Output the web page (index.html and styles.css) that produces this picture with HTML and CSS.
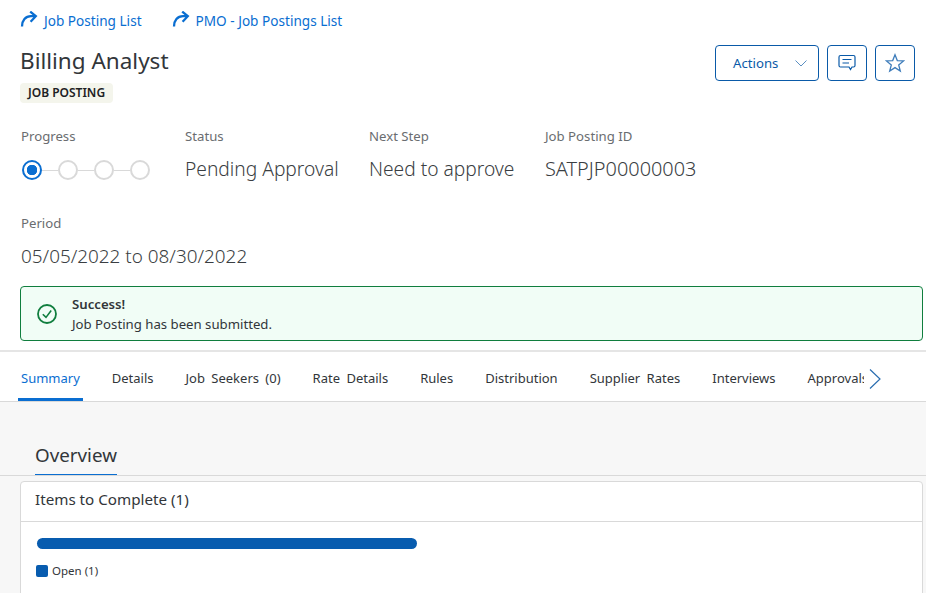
FILE: index.html
```html
<!DOCTYPE html>
<html lang="en">
<head>
  <meta charset="UTF-8" />
  <title>Billing Analyst</title>
  <link rel="stylesheet" href="styles.css">
</head>
<body>
  <header class="page-head">
    <nav class="crumbs">
      <a class="crumb" href="#">
        <svg class="crumb-icon" width="18" height="18" viewBox="0 0 18 18"><path d="M2 15.500 C2 9.500 5.500 5.200 11 5.200 H15 M10.200 .6 L15.800 5.200 L10.600 10.800" fill="none" stroke="#0a6ed1" stroke-width="2.300"/></svg>
        Job Posting List
      </a>
      <a class="crumb" href="#">
        <svg class="crumb-icon" width="18" height="18" viewBox="0 0 18 18"><path d="M2 15.500 C2 9.500 5.500 5.200 11 5.200 H15 M10.200 .6 L15.800 5.200 L10.600 10.800" fill="none" stroke="#0a6ed1" stroke-width="2.300"/></svg>
        PMO - Job Postings List
      </a>
    </nav>

    <div class="title-row">
      <div>
        <h1>Billing Analyst</h1>
        <span class="badge">JOB POSTING</span>
      </div>
      <div class="actions">
        <button class="btn btn-menu">Actions
          <svg width="12" height="7" viewBox="0 0 12 7"><path d="M.5 .5 L6 6 L11.500 .5" fill="none" stroke="#5b8fc2" stroke-width="1"/></svg>
        </button>
        <button class="btn btn-icon" aria-label="Comment">
          <svg width="18" height="18" viewBox="0 0 18 18"><path d="M2.500 1.500 H15.500 A1.500 1.500 0 0 1 17 3 V11.500 A1.500 1.500 0 0 1 15.500 13 H14 L12.500 15.500 L11 13 H2.500 A1.500 1.500 0 0 1 1 11.500 V3 A1.500 1.500 0 0 1 2.500 1.500 Z M4.500 5.500 H13.500 M4.500 9 H11" fill="none" stroke="#0a5aa8" stroke-width="1.200"/></svg>
        </button>
        <button class="btn btn-icon" aria-label="Favorite">
          <svg width="20" height="20" viewBox="0 0 20 20"><path d="M10 1.800 L12.300 7.600 L18.500 7.900 L13.700 11.900 L15.300 18 L10 14.600 L4.700 18 L6.300 11.900 L1.500 7.900 L7.700 7.600 Z" fill="none" stroke="#3f7dbb" stroke-width="1.300"/></svg>
        </button>
      </div>
    </div>

    <div class="facts">
      <div class="fact fact-progress">
        <div class="fact-label">Progress</div>
        <div class="steps">
          <span class="step step-current"></span><span class="step-line"></span>
          <span class="step"></span><span class="step-line"></span>
          <span class="step"></span><span class="step-line"></span>
          <span class="step"></span>
        </div>
      </div>
      <div class="fact fact-status">
        <div class="fact-label">Status</div>
        <div class="fact-value">Pending Approval</div>
      </div>
      <div class="fact fact-next">
        <div class="fact-label">Next Step</div>
        <div class="fact-value">Need to approve</div>
      </div>
      <div class="fact">
        <div class="fact-label">Job Posting ID</div>
        <div class="fact-value fact-value-id">SATPJP00000003</div>
      </div>
    </div>

    <div class="fact period">
      <div class="fact-label">Period</div>
      <div class="fact-value fact-value-date">05/05/2022 to 08/30/2022</div>
    </div>

    <div class="alert">
      <svg width="20" height="20" viewBox="0 0 20 20"><circle cx="10" cy="10" r="9" fill="none" stroke="#107e3e" stroke-width="1.800"/><path d="M5.800 10.200 L9 13.400 L14.200 6.600" fill="none" stroke="#107e3e" stroke-width="1.600"/></svg>
      <div>
        <div class="alert-title">Success!</div>
        <div>Job Posting has been submitted.</div>
      </div>
    </div>
  </header>

  <nav class="tabs">
    <a class="tab tab-active" href="#">Summary</a>
    <a class="tab" href="#">Details</a>
    <a class="tab" href="#">Job Seekers (0)</a>
    <a class="tab" href="#">Rate Details</a>
    <a class="tab" href="#">Rules</a>
    <a class="tab" href="#">Distribution</a>
    <a class="tab" href="#">Supplier Rates</a>
    <a class="tab" href="#">Interviews</a>
    <a class="tab tab-cut" href="#">Approvals</a>
    <svg class="tabs-next" width="12" height="20" viewBox="0 0 12 20"><path d="M1 .5 L11 10 L1 19.500" fill="none" stroke="#2a6db0" stroke-width="1.200"/></svg>
  </nav>

  <main class="content">
    <div class="section-head">
      <h2>Overview</h2>
    </div>
    <section class="card">
      <div class="card-head">Items to Complete (1)</div>
      <div class="card-body">
        <div class="bar"></div>
        <div class="legend"><span class="legend-dot"></span>Open (1)</div>
      </div>
    </section>
  </main>
</body>
</html>
```

FILE: styles.css
```css
html, body {
  height: 100%;
}

body {
  margin: 0;
  font-family: "Noto Sans", "Open Sans", sans-serif;
  color: #32363a;
  background: #fff;
  overflow: hidden;
}

.page-head {
  padding: 10px 3px 0 20px;
  height: 340px;
  box-sizing: border-box;
}

.crumbs {
  display: flex;
  gap: 30px;
  height: 20px;
}

.crumb {
  display: flex;
  align-items: center;
  gap: 6px;
  font-size: 13.600px;
  color: #0a6ed1;
  text-decoration: none;
}

.title-row {
  display: flex;
  justify-content: space-between;
  margin-top: 12px;
  padding-right: 8px;
}

h1 {
  margin: 0;
  font-size: 22.500px;
  font-weight: 400;
  line-height: 38px;
}

.badge {
  display: block;
  width: fit-content;
  margin-top: 3px;
  padding: 0 8px;
  height: 20px;
  line-height: 20px;
  font-size: 12px;
  font-weight: 600;
  color: #1d2124;
  background: #f4f5ec;
  border-radius: 4px;
}

.actions {
  display: flex;
  gap: 8px;
  margin-top: 3px;
}

.btn {
  height: 36px;
  box-sizing: border-box;
  border: 1px solid #0a5aa8;
  border-radius: 4px;
  background: #fff;
  color: #0a5aa8;
  font-family: inherit;
  font-size: 13.200px;
  display: flex;
  align-items: center;
  justify-content: center;
  padding: 0;
}

.btn-menu {
  width: 104px;
  gap: 17px;
  justify-content: flex-start;
  padding-left: 17px;
}

.btn-icon {
  width: 40px;
}

.facts {
  display: flex;
  margin-top: 23px;
  padding-left: 1px;
}

.fact-progress {
  width: 164px;
}

.fact-status {
  width: 184px;
}

.fact-next {
  width: 176px;
}

.fact-label {
  font-size: 13.200px;
  line-height: 20px;
  color: #6a6d70;
}

.fact-value {
  margin-top: 9px;
  font-size: 19.200px;
  font-weight: 300;
  line-height: 28px;
  color: #3a3e42;
}

.fact-value-id {
  font-size: 19.900px;
}

.fact-value-date {
  font-size: 18.900px;
}

.steps {
  display: flex;
  align-items: center;
  margin-top: 10px;
  margin-left: 1px;
  height: 28px;
}

.step {
  width: 20px;
  height: 20px;
  box-sizing: border-box;
  border: 2px solid #d9d9d9;
  border-radius: 50%;
  background: #fff;
}

.step-current {
  border-color: #0a6ed1;
  background: radial-gradient(circle, #0a6ed1 0 5px, #fff 5.500px);
}

.step-line {
  width: 16px;
  height: 1px;
  background: #d9d9d9;
}

.period {
  margin-top: 29px;
  padding-left: 1px;
}

.alert {
  display: flex;
  align-items: center;
  gap: 15px;
  height: 55px;
  box-sizing: border-box;
  margin-top: 16px;
  padding: 0 16px;
  border: 1px solid #107e3e;
  border-radius: 4px;
  background: #f1fdf6;
  font-size: 13.200px;
  line-height: 20px;
}

.alert-title {
  font-weight: 600;
}

.tabs {
  display: flex;
  align-items: center;
  gap: 26px;
  height: 52px;
  margin-top: 10px;
  padding-left: 18px;
  border-top: 2px solid #e5e5e5;
  border-bottom: 1px solid #d9d9d9;
  font-size: 13px;
  word-spacing: 3px;
  white-space: nowrap;
  background: #fff;
  box-sizing: border-box;
}

.tab {
  display: flex;
  align-items: center;
  height: 100%;
  color: #32363a;
  text-decoration: none;
  box-sizing: border-box;
  padding: 2px 3px 0;
}

.tab-active {
  color: #0a6ed1;
  box-shadow: inset 0 -3px 0 #0a6ed1;
}

.tab-cut {
  width: 59px;
  overflow: hidden;
  padding-right: 0;
}

.tabs-next {
  margin-left: -21px;
  margin-top: 4px;
  flex-shrink: 0;
}

.content {
  background: #f7f7f7;
  height: 191px;
  overflow: hidden;
}

.section-head {
  display: flex;
  align-items: flex-end;
  height: 74px;
  box-sizing: border-box;
  padding-left: 35px;
  border-bottom: 1px solid #d9d9d9;
}

h2 {
  margin: 0;
  height: 33px;
  font-size: 18.800px;
  font-weight: 400;
  line-height: 26px;
  box-sizing: border-box;
  border-bottom: 1px solid #0a6ed1;
}

.card {
  margin: 5px 3px 0 20px;
  border: 1px solid #d9d9d9;
  border-radius: 4px;
  background: #fff;
  height: 200px;
}

.card-head {
  height: 40px;
  box-sizing: border-box;
  padding-left: 14px;
  border-bottom: 1px solid #d9d9d9;
  font-size: 15.200px;
  line-height: 34px;
}

.card-body {
  padding: 16px 15px;
}

.bar {
  width: 380px;
  margin-left: 1px;
  height: 11px;
  border-radius: 6px;
  background: #085caf;
}

.legend {
  display: flex;
  align-items: center;
  gap: 4px;
  margin-top: 15px;
  font-size: 11.500px;
  line-height: 14px;
}

.legend-dot {
  width: 12px;
  height: 12px;
  border-radius: 2px;
  background: #085caf;
}
```
